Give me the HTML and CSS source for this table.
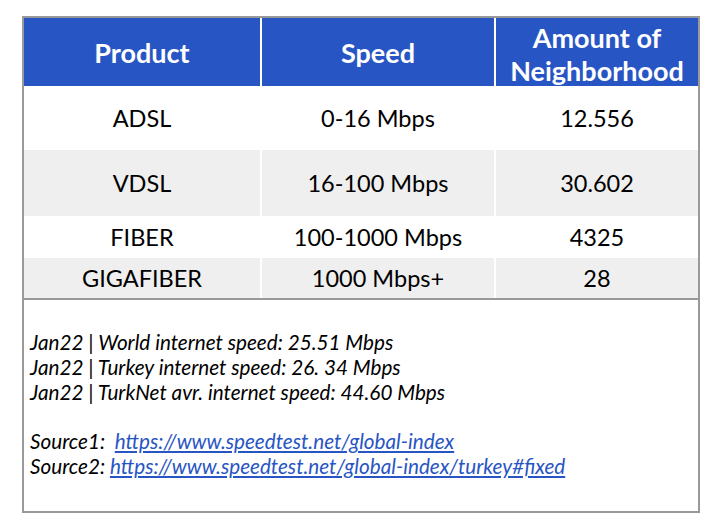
FILE: index.html
```html
<!DOCTYPE html>
<html>
<head>
<meta charset="utf-8">
<link rel="stylesheet" href="styles.css">
</head>
<body>
<div class="frame">
  <div class="grid">
    <div class="cell head">Product</div>
    <div class="cell head">Speed</div>
    <div class="cell head two">Amount of<br>Neighborhood</div>

    <div class="cell r1">ADSL</div>
    <div class="cell r1">0-16 Mbps</div>
    <div class="cell r1">12.556</div>

    <div class="cell r2 alt">VDSL</div>
    <div class="cell r2 alt">16-100 Mbps</div>
    <div class="cell r2 alt">30.602</div>

    <div class="cell r3">FIBER</div>
    <div class="cell r3">100-1000 Mbps</div>
    <div class="cell r3">4325</div>

    <div class="cell r4 alt">GIGAFIBER</div>
    <div class="cell r4 alt">1000 Mbps+</div>
    <div class="cell r4 alt">28</div>
  </div>
  <div class="notes">
    <p class="line">Jan22 | World internet speed: 25.51 Mbps</p>
    <p class="line">Jan22 | Turkey internet speed: 26. 34 Mbps</p>
    <p class="line">Jan22 | TurkNet avr. internet speed: 44.60 Mbps</p>
    <p class="line blank">&nbsp;</p>
    <p class="line">Source1:&nbsp; <a href="#">https://www.speedtest.net/global-index</a></p>
    <p class="line">Source2: <a href="#">https://www.speedtest.net/global-index/turkey#fixed</a></p>
  </div>
</div>
</body>
</html>
```

FILE: styles.css
```css
html, body {
  margin: 0;
  padding: 0;
  background: #ffffff;
}
body {
  font-family: Lato, "Liberation Sans", sans-serif;
  color: #000000;
}
.frame {
  margin: 16px 0 0 22px;
  width: 674px;
  height: 493px;
  border: 2px solid #999999;
  display: flex;
  flex-direction: column;
}
.grid {
  display: grid;
  grid-template-columns: 236px 232px 202px;
  grid-template-rows: 68px 64px 66px 42px 40px;
  column-gap: 2px;
  background: #ffffff;
  border-bottom: 2px solid #999999;
}
.cell {
  display: flex;
  align-items: center;
  justify-content: center;
  text-align: center;
  font-size: 23.5px;
  background: #ffffff;
}
.cell.alt {
  background: #efefef;
}
.cell.head {
  background: #2855c4;
  color: #ffffff;
  font-weight: 700;
  font-size: 27px;
  line-height: 33px;
}
.cell.head.two {
  padding-top: 3px;
}
.notes {
  padding: 30px 0 0 6px;
  font-style: italic;
  font-size: 20.7px;
  line-height: 24.8px;
}
.line {
  margin: 0;
}
.notes a {
  color: #2855c4;
  text-decoration: underline;
}
```
